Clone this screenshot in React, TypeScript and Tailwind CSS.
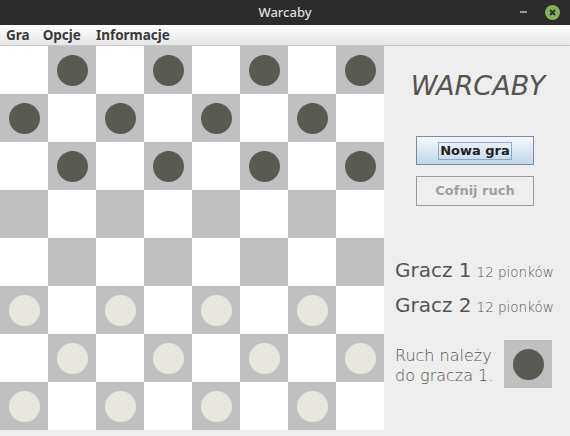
import React from "react";

const Piece = ({ dark }: { dark: boolean }) => (
  <div
    className={
      "w-[31px] h-[31px] rounded-full mt-[1px] " +
      (dark ? "bg-[#5a5a55]" : "bg-[#e7e7df]")
    }
  />
);

export default function App() {
  const rows = Array.from({ length: 8 }, (_, r) => r);
  const cols = Array.from({ length: 8 }, (_, c) => c);
  return (
    <div className="w-[570px] h-[436px] bg-[#eeeeee] flex flex-col overflow-hidden" style={{ fontFamily: "'DejaVu Sans', sans-serif" }}>
      {/* title bar */}
      <div className="h-[25px] bg-[#2c2c2c] flex items-center relative shrink-0">
        <div className="flex-1 text-center text-[13px] text-[#dcdcdc] font-medium" style={{ fontFamily: "'Noto Sans', sans-serif" }}>
          Warcaby
        </div>
        <div className="absolute left-[520px] top-[11px] w-[7px] h-[2px] bg-[#9a9a9a]" />
        <div className="absolute left-[545px] top-[5px] w-[15px] h-[15px] rounded-full bg-[#87b158] flex items-center justify-center">
          <svg width="7" height="7" viewBox="0 0 7 7">
            <path d="M1 1 L6 6 M6 1 L1 6" stroke="#2c2c2c" strokeWidth="1.8" />
          </svg>
        </div>
      </div>
      {/* menu bar */}
      <div className="h-[21px] shrink-0 bg-gradient-to-b from-[#ffffff] to-[#e6e6e6] border-b border-[#c8c8c8] flex items-center text-[13.5px] font-bold text-[#3a3a3a]" style={{ fontFamily: "'Noto Sans', sans-serif" }}>
        <span className="ml-[6px]">Gra</span>
        <span className="ml-[13px]">Opcje</span>
        <span className="ml-[15px]">Informacje</span>
      </div>
      {/* body */}
      <div className="flex">
        <div className="grid grid-cols-8 w-[384px] h-[384px] shrink-0">
          {rows.map((r) =>
            cols.map((c) => {
              const dark = (r + c) % 2 === 1;
              return (
                <div
                  key={r + "-" + c}
                  className={
                    "w-[48px] h-[48px] flex items-start justify-center pt-[8px] " +
                    (dark ? "bg-[#c0c0c0]" : "bg-white")
                  }
                >
                  {dark && r < 3 && <Piece dark />}
                  {dark && r > 4 && <Piece dark={false} />}
                </div>
              );
            })
          )}
        </div>
        <div className="flex-1 flex flex-col text-[#555550]">
          <div className="mt-[24px] text-center italic text-[27px] leading-[32px] pl-[2px] text-[#555550]">
            WARCABY
          </div>
          <div className="mt-[34px] flex flex-col items-center pr-[4px]">
            <div className="w-[118px] h-[29px] border border-[#7d8b9b] bg-gradient-to-b from-[#f4f8fc] to-[#c4d6ea] flex items-center justify-center">
              <span className="border border-[#8fa8c8] px-[1px] leading-[16px] text-[13px] font-bold text-[#222]">Nowa gra</span>
            </div>
            <div className="mt-[11px] w-[118px] h-[30px] border border-[#9a9a9a] flex items-center justify-center text-[13px] font-bold text-[#a0a0a0]">
              Cofnij ruch
            </div>
          </div>
          <div className="mt-[49px] pl-[11px] flex items-baseline">
            <span className="text-[20px]">Gracz 1</span>
            <span className="text-[13.5px] ml-[5px] font-light">12 pionków</span>
          </div>
          <div className="mt-[5px] pl-[11px] flex items-baseline">
            <span className="text-[20px]">Gracz 2</span>
            <span className="text-[13.5px] ml-[5px] font-light">12 pionków</span>
          </div>
          <div className="mt-[20px] pl-[11px] flex items-start">
            <div className="text-[16px] leading-[20px] font-light mt-[6px]">
              Ruch należy
              <br />
              do gracza 1.
            </div>
            <div className="ml-auto mr-[18px] w-[48px] h-[48px] bg-[#c0c0c0] flex items-start justify-center pt-[8px]">
              <Piece dark />
            </div>
          </div>
        </div>
      </div>
    </div>
  );
}
